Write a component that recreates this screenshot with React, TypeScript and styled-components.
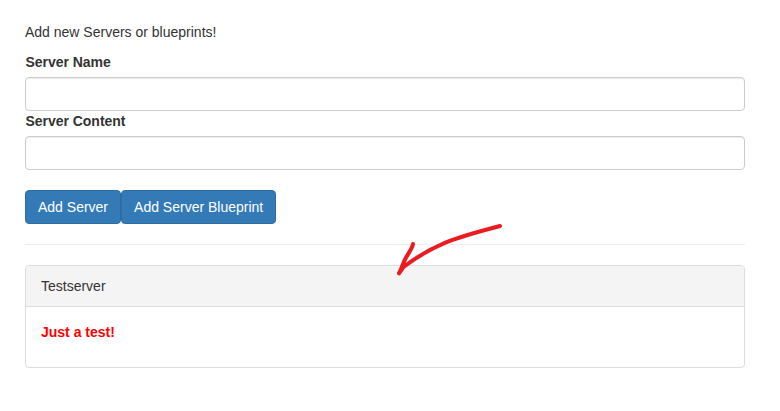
import React from 'react';
import styled, { createGlobalStyle } from 'styled-components';

const GlobalStyle = createGlobalStyle`
  *, *::before, *::after { box-sizing: border-box; }
  body {
    margin: 0;
    background: #fff;
    color: #333;
    font: 14px/20px "Liberation Sans", Arial, sans-serif;
  }
`;

const Page = styled.main`
  width: 745px;
  padding: 22px 0 0 25px;
`;

const Intro = styled.p`
  margin: 0 0 10px;
`;

const Label = styled.label`
  display: block;
  margin-bottom: 5px;
  padding-left: 0.5px;
  font-weight: 700;
  letter-spacing: -0.03px;
`;

const Input = styled.input`
  display: block;
  width: 100%;
  height: 34px;
  padding: 6px 12px;
  border: 1px solid #ccc;
  border-radius: 4px;
  font: inherit;
  background: #fff;
  box-shadow: inset 0 1px 1px rgba(0, 0, 0, 0.075);
`;

const Actions = styled.div`
  display: flex;
  margin-top: 20px;
`;

const Button = styled.button`
  height: 34px;
  padding: 6px 12px;
  border: 1px solid #2e6da4;
  border-radius: 4px;
  background: #337ab7;
  color: #fff;
  font: inherit;
  white-space: nowrap;
`;

const Divider = styled.hr`
  margin: 20px 0;
  border: 0;
  border-top: 1px solid #eee;
`;

const Panel = styled.section`
  border: 1px solid #ddd;
  border-radius: 4px;
  box-shadow: 0 1px 1px rgba(0, 0, 0, 0.05);
`;

const PanelHeading = styled.header`
  padding: 10px 15px;
  border-bottom: 1px solid #ddd;
  border-radius: 3px 3px 0 0;
  background: #f4f4f4;
`;

const PanelBody = styled.div`
  padding: 15px 15px 25px;
`;

const Message = styled.strong`
  color: #f00;
`;

const Arrow = styled.svg`
  position: absolute;
  left: 390px;
  top: 220px;
  pointer-events: none;
`;

export default function App() {
  return (
    <Page>
      <GlobalStyle />
      <Intro>Add new Servers or blueprints!</Intro>
      <Label htmlFor="name">Server Name</Label>
      <Input id="name" />
      <Label htmlFor="content">Server Content</Label>
      <Input id="content" />
      <Actions>
        <Button>Add Server</Button>
        <Button>Add Server Blueprint</Button>
      </Actions>
      <Divider />
      <Panel>
        <PanelHeading>Testserver</PanelHeading>
        <PanelBody>
          <Message>Just a test!</Message>
        </PanelBody>
      </Panel>
      <Arrow width="120" height="60" viewBox="390 220 120 60" fill="none" stroke="#ea1c20" strokeWidth="4" strokeLinecap="round" strokeLinejoin="round">
        <path d="M500 226C477 232 462 236 446 242.3C430 249 416 257.5 403.5 267L399 273.3C401.5 269 402.5 264.5 405 259.5C407.5 254 412.5 248.5 413 244" />
      </Arrow>
    </Page>
  );
}
